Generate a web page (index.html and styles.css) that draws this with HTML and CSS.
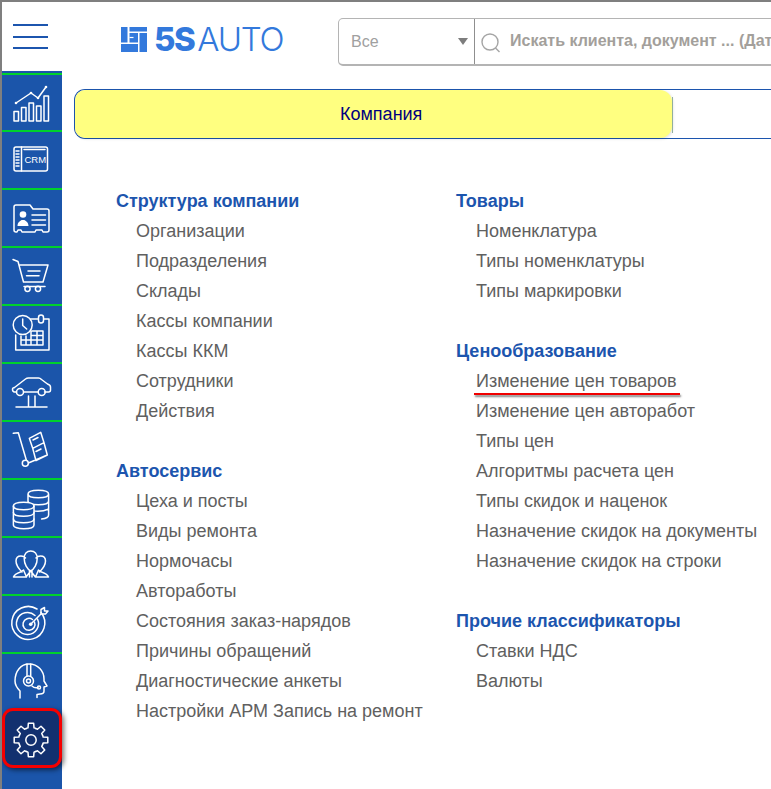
FILE: index.html
```html
<!DOCTYPE html>
<html lang="ru">
<head>
<meta charset="utf-8">
<title>5S AUTO</title>
<link rel="stylesheet" href="styles.css">
</head>
<body>
<div class="page">
  <header class="topbar">
    <div class="burger"><span></span><span></span><span></span></div>
    <div class="logo">
      <svg class="logo-mark" viewBox="0 0 26 25" width="26" height="25"><path d="M0 0h6.500v15.500H0zM8.500 0H26v4.500H8.500zM8.500 6h8.500v9.500H8.500zM18.500 6H26v19h-7.500zM0 17h17v8H0z" fill="#3379dc"/><path d="M8.500 10.500h4" stroke="#fff" stroke-width="1.200"/></svg>
      <span class="logo-bold">5S</span><span class="logo-thin">AUTO</span>
    </div>
    <div class="search">
      <div class="search-scope"><span>Все</span><i class="caret"></i></div>
      <div class="search-field">
        <svg width="22" height="22" viewBox="0 0 22 22" class="search-icon"><circle cx="10" cy="10" r="8" fill="none" stroke="#a5a5a5" stroke-width="1.400"/><path d="M15.500 16l4 4" stroke="#a5a5a5" stroke-width="1.400"/></svg>
        <span class="placeholder">Искать клиента, документ ... (Дата, номер документа)</span>
      </div>
    </div>
  </header>
  <div class="body">
    <nav class="sidebar">
      <a class="nav-item nav-first"><svg viewBox="2 73 60 57"><path d="M16 103l15-10 7 5 8-11"/><circle class="dot" cx="16" cy="103" r="1.300"/><circle class="dot" cx="31" cy="93" r="1.300"/><circle class="dot" cx="38" cy="98" r="1.300"/><circle class="dot" cx="46" cy="87" r="1.300"/><path d="M14 111.500h4.500V121H14zM21.500 107.500H26V121h-4.500zM29 103h4.500v18H29zM36.500 106H41v15h-4.500zM44 96h4.500v25H44z"/></svg></a>
      <a class="nav-item"><svg viewBox="2 130 60 58"><rect x="14" y="147" width="33.500" height="24" rx="2"/><path d="M21.500 147v24M16 151h3M16 154h3M16 157h3M16 160h3M16 163h3M16 166h3M24 149.500h21"/><text x="24.500" y="163" class="crm">CRM</text></svg></a>
      <a class="nav-item"><svg viewBox="2 188 60 58"><path d="M16 205h14l3 4h14a2 2 0 0 1 2 2v19a2 2 0 0 1-2 2h-4l-1-2h-6l-1 2h-13l-1-2h-3l-1 2h-1a2 2 0 0 1-2-2v-23a2 2 0 0 1 2-2z"/><circle class="dot" cx="23" cy="214.500" r="3.300"/><path class="dot" d="M17.500 226c0-4 3-5 4-6h3c1 1 4 2 4 6z"/><path d="M32 215h13.500M32 220h13.500M32 225h13.500"/></svg></a>
      <a class="nav-item"><svg viewBox="2 246 60 58"><path d="M13 259.500l5 2 5.500 20.500H43l5-17H20M24 286.500h21M28 271h12M26.500 275.700h12.500"/><circle cx="27.500" cy="288.800" r="2.600"/><circle cx="38" cy="288.800" r="2.600"/></svg></a>
      <a class="nav-item"><svg viewBox="2 304 60 58"><path d="M28 319h10M44 319h5v31H15.700v-15"/><rect x="38.500" y="315" width="5" height="8" rx="2.500"/><circle class="bgfill" cx="22.700" cy="325" r="9.500"/><path d="M22.700 319v6.500l4 3.500M32 331h11v14H21v-9M26 336v9M31 331v14M37 331v14M31 335.500h12M21 340h22"/></svg></a>
      <a class="nav-item"><svg viewBox="2 362 60 58"><path d="M16.500 392h-2c-1.500 0-2-1-2-3 0-1.500 1-1 2-1.500l11-8.500c1-.8 2-1 3-1h10c1.500 0 2 .5 3 1.500l6 4.500c1.500.5 3 1.500 3 3v3c0 1-.5 2-2 2h-4M24 392h14"/><circle cx="20" cy="392" r="3.500"/><circle cx="41.700" cy="392" r="3.500"/><path d="M28.500 396v11M35 396v11M16 407h31"/></svg></a>
      <a class="nav-item"><svg viewBox="2 420 60 58"><path d="M13.300 433.300l5-.6 8 27.300M29 462.700l18.300-7.700M29.300 438.300l11.400-6 3.300 10.400-11.300 5.600zM32.700 448.300l11.300-5.600 3.300 12.300-11.300 5.700zM33 440l5-2.500M36 451.500l5-2.500"/><circle cx="25.300" cy="463.300" r="3"/></svg></a>
      <a class="nav-item"><svg viewBox="2 478 60 58"><path d="M28 494c0-5 20.600-5 20.600 0v21c0 2.500-4 3.700-7 4M28 494c0 5 20.600 5 20.600 0M28 501c0 5 20.600 5 20.600 0M28 508c0 3 12 5 20.600 1M28 494v10"/><path class="bgfill" d="M13.400 506c0-5 20.600-5 20.600 0v19c0 5-20.600 5-20.600 0z"/><path d="M13.400 506c0 5 20.600 5 20.600 0M13.400 512.500c0 5 20.600 5 20.600 0M13.400 519c0 5 20.600 5 20.600 0"/></svg></a>
      <a class="nav-item"><svg viewBox="2 536 60 58"><path d="M22 572c-3-3-6-7-6-11 0-3 2-5 5-5 2 0 3.500 .7 4.500 2M39.500 572c3-3 6-7 6-11 0-3-2-5-5-5-2 0-3.500 .7-4.500 2M30.700 551c-4 0-6.500 3-6.500 7.500 0 5.500 3 10.500 6.500 12.500 3.500-2 6.500-7 6.500-12.500 0-4.500-2.500-7.500-6.500-7.500zM13.500 577c1-3 4-4 7-5l3-2 3 7zM48.500 577c-1-3-4-4-7-5l-3-2-3 7zM26 577l4.700-6 4.700 6M29.500 577v-6M32 577v-6"/></svg></a>
      <a class="nav-item"><svg viewBox="2 594 60 58"><path d="M41 612.500a16.500 16.500 0 1 1-4-3.500M37.500 619a11 11 0 1 1-2.500-3.500M34.500 622a6 6 0 1 1-2-2.500"/><circle class="dot" cx="30.700" cy="624.300" r="1.800"/><path d="M30.700 624.300l10.500-10.500M41 609.500v4.500h4.500l2.500-3h-3.500v-3.500z"/></svg></a>
      <a class="nav-item"><svg viewBox="2 652 60 58"><path d="M20 698v-7c-3-3-5-6-5-10 0-10 6-17 14-17 9 0 15 7 15 15v2l3 5-3 1v4c0 2-2 3-4 3l-3 .5v3"/><path d="M27 664v12M30.700 664v12M32 686c2 2 4 2 6 1.500"/><circle cx="28.500" cy="681" r="5"/><circle cx="28.500" cy="681" r="2"/><circle cx="39" cy="687.500" r="1.500"/></svg></a>
      <a class="nav-item nav-active"><svg viewBox="-20 -20 40 40" class="gear"><defs><path id="tooth" d="M-4.780-11.550A12.500 12.500 0 0 1-3.020-12.130L-2.660-16.790H2.660L3.020-12.130A12.500 12.500 0 0 1 4.780-11.550"/></defs><use href="#tooth"/><use href="#tooth" transform="rotate(45)"/><use href="#tooth" transform="rotate(90)"/><use href="#tooth" transform="rotate(135)"/><use href="#tooth" transform="rotate(180)"/><use href="#tooth" transform="rotate(225)"/><use href="#tooth" transform="rotate(270)"/><use href="#tooth" transform="rotate(315)"/><circle r="5.200"/></svg></a>
    </nav>
    <main class="content">
      <div class="tabbar">
        <div class="tab">Компания</div>
        <i class="tab-edge"></i>
      </div>
      <div class="columns">
        <div class="column">
          <section class="group">
            <h3>Структура компании</h3>
            <ul><li>Организации</li><li>Подразделения</li><li>Склады</li><li>Кассы компании</li><li>Кассы ККМ</li><li>Сотрудники</li><li>Действия</li></ul>
          </section>
          <section class="group">
            <h3>Автосервис</h3>
            <ul><li>Цеха и посты</li><li>Виды ремонта</li><li>Нормочасы</li><li>Автоработы</li><li>Состояния заказ-нарядов</li><li>Причины обращений</li><li>Диагностические анкеты</li><li>Настройки АРМ Запись на ремонт</li></ul>
          </section>
        </div>
        <div class="column">
          <section class="group">
            <h3>Товары</h3>
            <ul><li>Номенклатура</li><li>Типы номенклатуры</li><li>Типы маркировки</li></ul>
          </section>
          <section class="group">
            <h3>Ценообразование</h3>
            <ul><li><span class="marked">Изменение цен товаров</span></li><li>Изменение цен авторабот</li><li>Типы цен</li><li>Алгоритмы расчета цен</li><li>Типы скидок и наценок</li><li>Назначение скидок на документы</li><li>Назначение скидок на строки</li></ul>
          </section>
          <section class="group">
            <h3>Прочие классификаторы</h3>
            <ul><li>Ставки НДС</li><li>Валюты</li></ul>
          </section>
        </div>
      </div>
    </main>
  </div>
</div>
</body>
</html>
```
FILE: styles.css
```css
* { box-sizing: border-box; }
html, body { margin: 0; height: 100%; overflow: hidden; background: #fff; }
body { font-family: "Liberation Sans", Arial, sans-serif; }
.page { height: 100vh; border-top: 2px solid #7f7f7f; border-left: 2px solid #7f7f7f; display: flex; flex-direction: column; overflow: hidden; }

.topbar { height: 69px; flex: none; display: flex; align-items: flex-start; }
.burger { width: 60px; flex: none; padding: 22px 14px 0 11px; display: flex; flex-direction: column; gap: 9.500px; }
.burger span { height: 2px; background: #1c55ae; display: block; }
.logo { margin: 20px 0 0 59px; display: flex; align-items: center; width: 217px; flex: none; color: #3379dc; font-family: Inter, sans-serif; font-size: 33px; line-height: 34px; }
.logo-mark { margin-right: 7px; flex: none; }
.logo-bold { font-weight: 800; letter-spacing: -1.500px; }
.logo-thin { font-weight: 300; letter-spacing: -1.200px; margin-left: 3px; }
.search { height: 48px; width: 600px; flex: none; border: 1px solid #b4b4b4; border-bottom-width: 2px; border-radius: 5px; display: flex; margin-top: 16px; }
.search-scope { width: 136px; flex: none; border-right: 1px solid #8f8f8f; display: flex; align-items: center; justify-content: space-between; padding: 0 6px 0 12px; color: #a0a0a0; font-size: 16px; }
.caret { width: 0; height: 0; border-left: 5px solid transparent; border-right: 5px solid transparent; border-top: 7px solid #7d7d7d; }
.search-field { flex: 1; display: flex; align-items: center; min-width: 0; padding-left: 5px; }
.search-icon { flex: none; margin-right: 8px; margin-top: 2px; }
.placeholder { white-space: nowrap; font-weight: 700; font-size: 16px; color: #a39f9b; margin-top: -2px; }

.body { flex: 1; display: flex; min-height: 0; }
.sidebar { width: 60px; flex: none; background: #1b55aa; padding-top: 2px; position: relative; display: flex; flex-direction: column; }
.nav-item { display: block; height: 58px; flex: none; border-top: 2px solid #00d22c; }
.nav-first { height: 57px; }
.nav-item svg { display: block; width: 60px; height: 58px; margin-top: -2px; fill: none; stroke: #fff; stroke-width: 1.500; stroke-linejoin: round; stroke-linecap: round; }
.nav-first svg { height: 57px; }
.nav-item .dot { fill: #fff; stroke: none; }
.nav-item .bgfill { fill: #1b55aa; }
.nav-item .crm { fill: #fff; stroke: none; font-family: "Liberation Sans", sans-serif; font-size: 9.500px; }
.nav-active { height: 60px; margin-top: -2px; border: 3px solid #f50000; border-radius: 11px; background: #12306f; box-shadow: 2px 2px 5px rgba(0, 0, 0, .55); position: relative; z-index: 1; display: flex; align-items: center; justify-content: center; }
.nav-item svg.gear { width: 40px; height: 40px; margin: 3px 2px 0 0; flex: none; }

.content { flex: 1; min-width: 0; padding: 18px 0 0 12px; }
.tabbar { height: 50px; border: 1px solid #1c55ae; border-right: 0; border-radius: 11px 0 0 11px; display: flex; align-items: stretch; }
.tab { width: 597px; flex: none; background: #ffff80; border-radius: 10px 12px 12px 10px; color: #00007f; font-size: 18px; display: flex; align-items: center; padding-left: 265px; box-shadow: 1px 1px 3px rgba(0, 0, 0, .12); }
.tab-edge { width: 1px; margin: 7px 0 5px; background: #92b09c; }

.columns { display: flex; padding: 47px 0 0 42px; }
.column { width: 340px; flex: none; }
.group { margin-bottom: 30px; }
.group h3 { margin: 0; font-size: 18px; line-height: 30px; font-weight: 700; color: #1c55ae; white-space: nowrap; }
.group ul { margin: 0; padding: 0 0 0 20px; list-style: none; }
.group li { font-size: 18px; line-height: 30px; color: #606060; white-space: nowrap; }
.marked { position: relative; display: inline-block; }
.marked::after { content: ""; position: absolute; left: -2px; right: -3px; bottom: 1px; height: 2px; background: #f00000; box-shadow: 1px 2px 2px rgba(0, 0, 0, .5); }
```
